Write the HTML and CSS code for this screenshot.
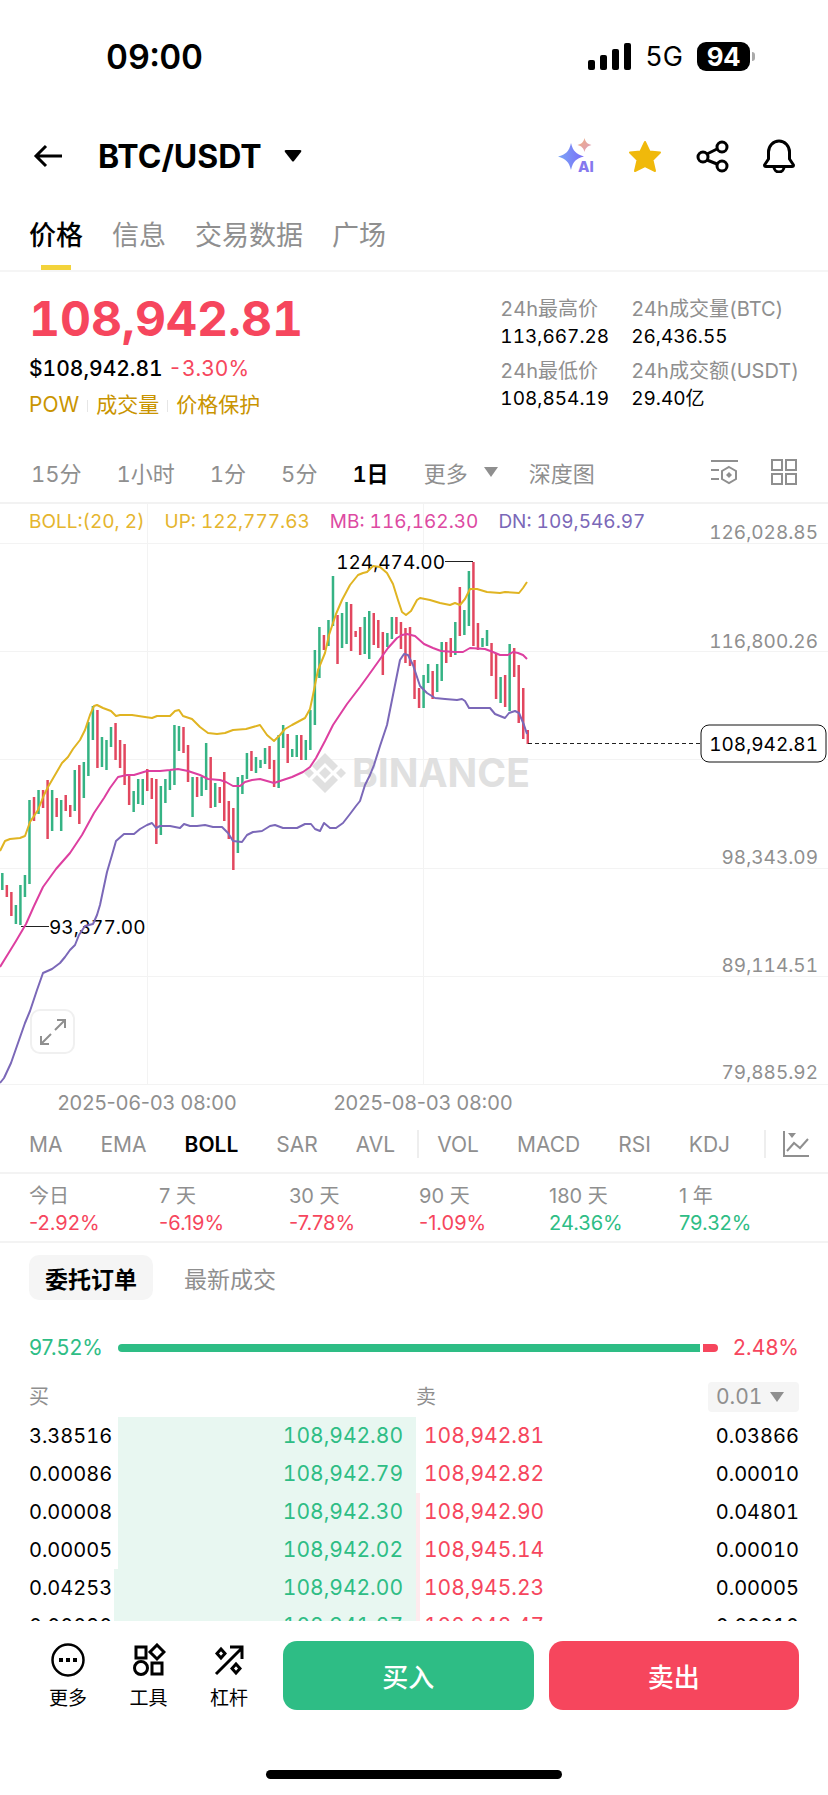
FILE: index.html
```html
<!DOCTYPE html>
<html lang="zh-CN">
<head>
    <meta charset="UTF-8">
    <meta name="viewport" content="width=device-width, initial-scale=1.0">
    <title>BTC/USDT</title>
    <link rel="stylesheet" href="styles.css">
</head>
<body>
<div class="app">
    <div class="status">
        <span class="clock">09:00</span>
        <div class="status-right">
            <svg class="signal" viewBox="0 0 43 27" width="43" height="27">
                <rect x="0" y="17" width="7" height="10" rx="2"/>
                <rect x="12" y="12" width="7" height="15" rx="2"/>
                <rect x="24" y="6" width="7" height="21" rx="2"/>
                <rect x="36" y="0" width="7" height="27" rx="2"/>
            </svg>
            <span class="network">5G</span>
            <span class="battery">94</span>
        </div>
    </div>

    <header class="header">
        <button class="icon-btn" aria-label="返回">
            <svg width="30" height="26" viewBox="0 0 30 26" fill="none" stroke="#000" stroke-width="3"><path d="M29 13H3M13 3L3 13l10 10"/></svg>
        </button>
        <button class="pair">BTC/USDT
            <svg width="18" height="12" viewBox="0 0 18 12"><path d="M2 0h14q2 0 1 2l-7 9q-1 1-2 0L1 2Q0 0 2 0z"/></svg>
        </button>
        <div class="header-actions">
            <button class="icon-btn" aria-label="AI">
                <svg class="ai-icon" width="36" height="36" viewBox="0 0 36 36">
                    <defs>
                        <linearGradient id="ai" x1="0" y1="0" x2="1" y2="0"><stop offset="0" stop-color="#7ba6f5"/><stop offset="1" stop-color="#7a6cf8"/></linearGradient>
                        <linearGradient id="spark" x1="0" y1="0" x2="1" y2="1"><stop offset="0" stop-color="#f0b080"/><stop offset="1" stop-color="#dc9cc0"/></linearGradient>
                    </defs>
                    <path fill="url(#ai)" d="M13 5c2 8 5 11 13 13.500c-8 2-11 5-13 13.500c-2-8-5-11-13-13.500c8-2 11-5 13-13.500z"/>
                    <path fill="url(#spark)" d="M26.500 0c1 4 3 6 7 7c-4 1-6 3-7 7c-1-4-3-6-7-7c4-1 6-3 7-7z"/>
                    <text class="ai-text" x="20" y="34">AI</text>
                </svg>
            </button>
            <button class="icon-btn" aria-label="收藏">
                <svg width="34" height="33" viewBox="0 0 34 33"><path fill="#f0b90b" stroke="#f0b90b" stroke-width="2" stroke-linejoin="round" d="M17 2l4.500 9.500 10.500 1-7.500 7.500 2.500 11-10-5-10 5 2.500-11L2 12.500l10.500-1z"/></svg>
            </button>
            <button class="icon-btn" aria-label="分享">
                <svg width="33" height="33" viewBox="0 0 33 33" fill="none" stroke="#000" stroke-width="3"><circle cx="7" cy="17" r="5"/><circle cx="26" cy="7" r="5"/><circle cx="26" cy="26" r="5"/><path d="M11 14l10-5M11 20l10 4"/></svg>
            </button>
            <button class="icon-btn" aria-label="提醒">
                <svg width="32" height="34" viewBox="0 0 32 34" fill="none" stroke="#000" stroke-width="3" stroke-linejoin="round"><path d="M5.500 13a10.500 11 0 0 1 21 0v7l4 6q0 1.500-1.500 1.500H3q-1.500 0-1.500-1.500l4-6zM11 28a5 5 0 0 0 10 0"/></svg>
            </button>
        </div>
    </header>

    <nav class="tabs">
        <a class="tab active" href="#price">价格</a>
        <a class="tab" href="#info">信息</a>
        <a class="tab" href="#data">交易数据</a>
        <a class="tab" href="#square">广场</a>
    </nav>

    <section class="summary" id="price">
        <div>
            <div class="last-price">108,942.81</div>
            <div class="fiat">$108,942.81 <span class="change">-3.30%</span></div>
            <div class="tags"><a href="#pow">POW</a><a href="#vol">成交量</a><a href="#protect">价格保护</a></div>
        </div>
        <dl class="stats">
            <div><dt>24h最高价</dt><dd>113,667.28</dd></div>
            <div><dt>24h成交量(BTC)</dt><dd>26,436.55</dd></div>
            <div><dt>24h最低价</dt><dd>108,854.19</dd></div>
            <div><dt>24h成交额(USDT)</dt><dd>29.40亿</dd></div>
        </dl>
    </section>

    <div class="frames">
        <button>15分</button>
        <button>1小时</button>
        <button>1分</button>
        <button>5分</button>
        <button class="active">1日</button>
        <button class="more">更多 <svg width="14" height="10" viewBox="0 0 14 10"><path fill="#8f8f8f" d="M0 0h14L7 10z"/></svg></button>
        <button>深度图</button>
        <div class="frames-tools">
            <button aria-label="指标设置">
                <svg width="27" height="26" viewBox="0 0 27 26" fill="none" stroke="#8f8f8f" stroke-width="2"><path d="M0 2h27M0 11h8M0 20h8M18 8l7 4v8l-7 4-7-4v-8z"/><path fill="#8f8f8f" stroke="none" d="M18 13l3 3-3 3-3-3z"/></svg>
            </button>
            <button aria-label="布局">
                <svg width="26" height="26" viewBox="0 0 26 26" fill="none" stroke="#8f8f8f" stroke-width="2"><path d="M1 1h10v10H1zM15 1h10v10H15zM1 15h10v10H1zM15 15h10v10H15z"/></svg>
            </button>
        </div>
    </div>

    <section class="chart">
        <div class="legend">
            <span class="up">BOLL:(20, 2)</span>
            <span class="up">UP: 122,777.63</span>
            <span class="mb">MB: 116,162.30</span>
            <span class="dn">DN: 109,546.97</span>
        </div>
        <svg class="plot" viewBox="0 504 828 612">
            <path class="grid" d="M0 543.500H828M0 651.500H828M0 759.500H828M0 868.500H828M0 976.500H828M0 1084.500H828M147.500 504V1084M423.500 504V1084"/>
            <g class="watermark">
                <path d="M325 753l13 13-5 5-8-8-8 8-5-5zM325 767l6 6-6 6-6-6zM309 768l5 5-5 5-5-5zM341 768l5 5-5 5-5-5zM312 780l5-5 8 8 8-8 5 5-13 13z"/>
                <text x="352" y="787">BINANCE</text>
            </g>
            <g id="candles"></g>
            <path class="mark" d="M445 561.500H473M21 926.500H49"/>
            <text class="peak-right" x="445" y="569">124,474.00</text>
            <text x="49" y="934">93,377.00</text>
            <g id="bands"></g>
            <path class="last-line" d="M528 743.500H700"/>
            <rect class="last-box" x="701" y="725" width="125" height="37" rx="8"/>
            <g class="axis">
                <text x="818" y="539">126,028.85</text>
                <text x="818" y="648">116,800.26</text>
                <text class="now" x="818" y="751">108,942.81</text>
                <text x="818" y="864">98,343.09</text>
                <text x="818" y="972">89,114.51</text>
                <text x="818" y="1079">79,885.92</text>
            </g>
            <g class="dates">
                <text x="147" y="1110">2025-06-03 08:00</text>
                <text x="423" y="1110">2025-08-03 08:00</text>
            </g>
        </svg>
        <button class="expand" aria-label="全屏">
            <svg width="26" height="26" viewBox="0 0 26 26" fill="none" stroke="#8f8f8f" stroke-width="2"><path d="M15 11L25 1M17 1h8v8M11 15L1 25M1 17v8h8"/></svg>
        </button>
    </section>

    <div class="indicators">
        <button>MA</button>
        <button>EMA</button>
        <button class="active">BOLL</button>
        <button>SAR</button>
        <button>AVL</button>
        <button class="sub-first">VOL</button>
        <button>MACD</button>
        <button>RSI</button>
        <button>KDJ</button>
        <button class="chart-btn" aria-label="图表">
            <svg width="27" height="27" viewBox="0 0 27 27" fill="none" stroke="#8f8f8f" stroke-width="2"><path d="M2 0v25h25M5 20l7-8 6 5 8-9"/><path fill="#8f8f8f" stroke="none" d="M6 2h8l-4 5z"/></svg>
        </button>
    </div>

    <dl class="perf">
        <div><dt>今日</dt><dd class="down">-2.92%</dd></div>
        <div><dt>7 天</dt><dd class="down">-6.19%</dd></div>
        <div><dt>30 天</dt><dd class="down">-7.78%</dd></div>
        <div><dt>90 天</dt><dd class="down">-1.09%</dd></div>
        <div><dt>180 天</dt><dd class="rise">24.36%</dd></div>
        <div><dt>1 年</dt><dd class="rise">79.32%</dd></div>
    </dl>

    <section class="orders">
        <div class="order-tabs">
            <button class="active">委托订单</button>
            <button>最新成交</button>
        </div>
        <div class="ratio">
            <span class="rise">97.52%</span>
            <div class="ratio-bar"><i class="buy-part" style="width: 97.52%"></i><i class="sell-part"></i></div>
            <span class="down">2.48%</span>
        </div>
        <table class="book">
            <colgroup><col class="col-bid"><col><col><col class="col-ask"></colgroup>
            <thead>
                <tr>
                    <th>买</th>
                    <th></th>
                    <th>卖</th>
                    <th>
                        <label class="step">
                            <select aria-label="价格精度"><option>0.01</option></select>
                            <svg width="14" height="10" viewBox="0 0 14 10"><path fill="#8f8f8f" d="M0 0h14L7 10z"/></svg>
                        </label>
                    </th>
                </tr>
            </thead>
            <tbody>
                <tr><td>3.38516</td><td class="bid"><i style="width: 100%"></i>108,942.80</td><td class="ask"><i style="width: 0%"></i>108,942.81</td><td>0.03866</td></tr>
                <tr><td>0.00086</td><td class="bid"><i style="width: 100%"></i>108,942.79</td><td class="ask"><i style="width: 0%"></i>108,942.82</td><td>0.00010</td></tr>
                <tr><td>0.00008</td><td class="bid"><i style="width: 100%"></i>108,942.30</td><td class="ask"><i style="width: 1.4%"></i>108,942.90</td><td>0.04801</td></tr>
                <tr><td>0.00005</td><td class="bid"><i style="width: 100%"></i>108,942.02</td><td class="ask"><i style="width: 1.4%"></i>108,945.14</td><td>0.00010</td></tr>
                <tr><td>0.04253</td><td class="bid"><i style="width: 101.3%"></i>108,942.00</td><td class="ask"><i style="width: 1.4%"></i>108,945.23</td><td>0.00005</td></tr>
                <tr><td>0.00090</td><td class="bid"><i style="width: 101.3%"></i>108,941.27</td><td class="ask"><i style="width: 1.4%"></i>108,948.47</td><td>0.00010</td></tr>
            </tbody>
        </table>
    </section>

    <footer class="footer">
        <div class="actions">
            <button class="action">
                <svg width="34" height="34" viewBox="0 0 34 34" fill="none" stroke="#000" stroke-width="2.500"><circle cx="17" cy="17" r="15.500"/><path stroke-width="4" d="M8 17h4M15 17h4M22 17h4"/></svg>
                更多
            </button>
            <button class="action">
                <svg width="34" height="34" viewBox="0 0 34 34" fill="none" stroke="#000" stroke-width="3"><path d="M4 4h10v11H4zM20 20h10v11H20zM25 2l7 7-7 7-7-7z"/><circle cx="9" cy="25" r="6.500"/></svg>
                工具
            </button>
            <button class="action">
                <svg width="34" height="34" viewBox="0 0 34 34" fill="none" stroke="#000" stroke-width="3"><path d="M4 31L30 5M18 4h12v12M9 6l4 4.500-4 4.500-4-4.500zM24 21l4 4.500-4 4.500-4-4.500z"/></svg>
                杠杆
            </button>
        </div>
        <button class="trade buy">买入</button>
        <button class="trade sell">卖出</button>
    </footer>
    <div class="home"></div>
</div>
<script src="chart.js"></script>
</body>
</html>
```
FILE: styles.css
```css
* {
    box-sizing: border-box;
}
body {
    margin: 0;
    background-color: #fff;
    color: #000;
    font-family: Inter, "Noto Sans CJK SC", sans-serif;
    font-size: 20px;
    font-variant-numeric: tabular-nums;
}
button, select {
    font: inherit;
    font-variant-numeric: inherit;
    color: inherit;
    background: none;
    border: none;
    padding: 0;
    margin: 0;
    cursor: pointer;
}
a {
    color: inherit;
    text-decoration: none;
}
dl, dd {
    margin: 0;
}
svg {
    display: block;
    flex: none;
}
.app {
    display: flex;
    flex-direction: column;
    height: 100vh;
    overflow: hidden;
}
.app > * {
    flex: none;
}
.rise {
    color: #2ebd85;
}
.down {
    color: #f6465d;
}

/* status bar */
.status {
    display: flex;
    justify-content: space-between;
    align-items: center;
    height: 112px;
    padding: 0 78px 0 106px;
}
.clock {
    font-size: 34px;
    font-weight: 600;
}
.status-right {
    display: flex;
    align-items: center;
    gap: 14px;
}
.network {
    font-size: 27px;
}
.battery {
    position: relative;
    width: 53px;
    height: 29px;
    border-radius: 9px;
    background-color: #000;
    color: #fff;
    font-size: 26px;
    font-weight: 700;
    line-height: 29px;
    text-align: center;
}
.battery::after {
    content: "";
    position: absolute;
    right: -5px;
    top: 10px;
    width: 3px;
    height: 9px;
    border-radius: 0 3px 3px 0;
    background-color: #aaa;
}

/* header */
.header {
    display: flex;
    align-items: center;
    height: 88px;
    padding: 0 33px;
}
.pair {
    display: flex;
    align-items: center;
    gap: 22px;
    margin-left: 35px;
    font-size: 32px;
    font-weight: 700;
}
.header-actions {
    display: flex;
    align-items: center;
    gap: 34px;
    margin-left: auto;
}
.ai-icon {
    overflow: visible;
}
.ai-text {
    font-size: 15px;
    font-weight: 800;
    fill: #8578ee;
}

/* tabs */
.tabs {
    display: flex;
    gap: 29px;
    height: 72px;
    padding: 0 29px;
    border-bottom: 2px solid #f5f5f5;
    font-size: 27px;
    line-height: 71px;
    color: #8f8f8f;
}
.tab.active {
    position: relative;
    color: #000;
    font-weight: 500;
}
.tab.active::after {
    content: "";
    position: absolute;
    left: 12px;
    right: 12px;
    bottom: 0;
    height: 5px;
    background-color: #f3d33b;
}

/* summary */
.summary {
    display: flex;
    justify-content: space-between;
    height: 172px;
    padding: 21px 29px 0;
}
.last-price {
    color: #f6465d;
    font-size: 48px;
    font-weight: 700;
    line-height: 52px;
}
.fiat {
    margin-top: 8px;
    font-size: 21px;
    font-weight: 500;
    line-height: 32px;
}
.change {
    color: #f6465d;
    font-weight: 400;
}
.tags {
    display: flex;
    align-items: center;
    margin-top: 4px;
    color: #c99400;
    font-size: 21px;
    line-height: 32px;
}
.tags a + a::before {
    content: "";
    display: inline-block;
    width: 1px;
    height: 12px;
    margin: 0 8px;
    background-color: #e6e6e6;
}
.stats {
    display: grid;
    grid-template-columns: auto auto;
    column-gap: 22px;
    align-content: start;
    row-gap: 8px;
    padding-top: 3px;
    line-height: 27px;
}
.stats dt {
    color: #8f8f8f;
}
.stats dd {
    font-size: 19px;
}

/* timeframes */
.frames {
    display: flex;
    align-items: center;
    gap: 35px;
    height: 56px;
    padding: 0 31px;
    color: #8f8f8f;
    font-size: 22px;
}
.frames .active {
    color: #000;
    font-weight: 600;
}
.more {
    display: flex;
    align-items: center;
    gap: 16px;
    margin-right: -4px;
}
.frames-tools {
    display: flex;
    gap: 33px;
    margin-left: auto;
}

/* chart */
.chart {
    position: relative;
    margin-top: 2px;
    border-top: 2px solid #f2f2f2;
}
.legend {
    position: absolute;
    top: 5px;
    left: 29px;
    display: flex;
    gap: 20px;
    font-size: 19px;
    line-height: 26px;
}
.up {
    color: #e5b52e;
}
.mb {
    color: #dd4aa2;
}
.dn {
    color: #7b68b8;
}
.plot {
    width: 100%;
    height: auto;
    font-size: 19px;
}
.grid {
    stroke: #f3f3f3;
}
.watermark {
    fill: #e0e0e0;
    font-size: 39px;
    font-weight: 700;
}
.candle {
    stroke-width: 2.5;
}
.candle.green {
    stroke: #35b384;
}
.candle.red {
    stroke: #e2475f;
}
.band {
    fill: none;
    stroke-width: 2;
    stroke-linejoin: round;
}
.band.upper {
    stroke: #e0b422;
}
.band.middle {
    stroke: #dd3fa0;
}
.band.lower {
    stroke: #7b68b8;
}
.mark {
    stroke: #222;
}
.axis text, .peak-right {
    text-anchor: end;
}
.axis text {
    fill: #8f8f8f;
}
.axis .now {
    fill: #000;
}
.last-line {
    stroke: #222;
    stroke-dasharray: 4 3;
}
.last-box {
    fill: #fff;
    stroke: #111;
}
.dates text {
    fill: #8f8f8f;
    font-size: 20px;
    font-variant-numeric: normal;
    text-anchor: middle;
}
.expand {
    position: absolute;
    left: 30px;
    bottom: 62px;
    display: flex;
    align-items: center;
    justify-content: center;
    width: 45px;
    height: 45px;
    border: 2px solid #f0f0f0;
    border-radius: 10px;
    background-color: #fff;
}

/* indicators */
.indicators {
    display: flex;
    align-items: center;
    gap: 38px;
    height: 56px;
    padding: 0 18px 0 29px;
    color: #8f8f8f;
    font-size: 21px;
}
.indicators .active {
    color: #000;
    font-weight: 600;
}
.sub-first, .chart-btn {
    height: 28px;
    padding-left: 18px;
    border-left: 2px solid #eee;
}
.sub-first {
    margin-left: -16px;
}
.chart-btn {
    margin-left: -4px;
    padding-left: 16px;
}

/* performance */
.perf {
    display: grid;
    grid-template-columns: repeat(6, 1fr);
    height: 71px;
    padding: 9px 19px 0 29px;
    border-top: 2px solid #f3f3f3;
    border-bottom: 2px solid #f3f3f3;
    font-variant-numeric: normal;
    line-height: 27px;
}
.perf dt {
    color: #8f8f8f;
}

/* order book */
.app > .orders {
    flex: 1 1 0;
    min-height: 0;
    overflow: hidden;
}
.order-tabs {
    display: flex;
    gap: 15px;
    padding: 12px 29px 0;
    font-size: 23px;
    color: #8f8f8f;
}
.order-tabs button {
    height: 45px;
    padding: 0 16px;
    border-radius: 10px;
}
.order-tabs .active {
    background-color: #f5f5f5;
    color: #000;
    font-weight: 600;
}
.ratio {
    display: flex;
    align-items: center;
    gap: 15px;
    margin-top: 32px;
    padding: 0 29px;
    font-size: 21px;
    font-variant-numeric: normal;
    line-height: 32px;
}
.ratio-bar {
    display: flex;
    gap: 3px;
    flex: 1;
    height: 8px;
    border-radius: 4px;
    overflow: hidden;
}
.buy-part {
    background-color: #2ebd85;
}
.sell-part {
    flex: 1;
    min-width: 15px;
    background-color: #f6465d;
}
.book {
    width: 100%;
    margin-top: 13px;
    border-collapse: collapse;
    table-layout: fixed;
    font-size: 21px;
    line-height: 38px;
}
.col-bid {
    width: 118px;
}
.col-ask {
    width: 114px;
}
.book th {
    height: 40px;
    padding: 0;
    color: #8f8f8f;
    font-size: 20px;
    font-weight: 400;
    text-align: left;
}
.book td {
    padding: 0;
}
.book td:first-child, .book td:last-child {
    font-size: 20px;
}
.book th:first-child, .book td:first-child {
    padding-left: 29px;
}
.book td:last-child, .book th:last-child {
    padding-right: 29px;
    text-align: right;
}
.bid, .ask {
    position: relative;
    z-index: 0;
}
.book .bid {
    padding-right: 13px;
    color: #2ebd85;
    text-align: right;
}
.book .ask {
    padding-left: 8px;
    color: #f6465d;
}
.bid i, .ask i {
    position: absolute;
    top: 0;
    bottom: 0;
    z-index: -1;
}
.bid i {
    right: 0;
    background-color: #e8f7f1;
}
.ask i {
    left: 0;
    background-color: #feebee;
}
.step {
    display: flex;
    align-items: center;
    float: right;
    gap: 8px;
    width: 85px;
    min-width: 91px;
    height: 30px;
    padding: 0 15px 0 8px;
    border-radius: 4px;
    background-color: #f5f5f5;
}
.step select {
    appearance: none;
    width: 46px;
    font-size: 21px;
    color: #8f8f8f;
}

/* bottom bar */
.footer {
    display: flex;
    gap: 15px;
    height: 109px;
    padding: 20px 29px 0;
    background-color: #fff;
}
.actions {
    display: flex;
    justify-content: space-between;
    width: 239px;
}
.action {
    display: flex;
    flex-direction: column;
    align-items: center;
    gap: 8px;
    height: 69px;
    width: 78px;
    padding-top: 2px;
    font-size: 19px;
    line-height: 28px;
}
.trade {
    flex: 1;
    height: 69px;
    border-radius: 14px;
    color: #fff;
    font-size: 26px;
    font-weight: 500;
}
.buy {
    background-color: #2ebd85;
}
.sell {
    background-color: #f6465d;
}
.home {
    width: 296px;
    height: 9px;
    margin: 40px auto 16px;
    border-radius: 5px;
    background-color: #000;
}
```
FILE: chart.js
```js
const svgNS = 'http://www.w3.org/2000/svg';

// direction (g = up, r = down), high, low
const candles = `g873-890 r885-897 r892-916 g905-924 g885-925 g875-897 g800-884 r797-821 g790-814 r790-808
r780-839 g790-831 r798-817 g800-831 r795-811 r805-817 g770-811 r765-824 g762-798 g722-776
g706-740 r710-768 g737-767 g740-770 g727-747 r723-760 r740-768 r744-785 r776-805 g791-812
g779-804 g779-805 r769-791 r778-799 r779-844 g786-835 g779-803 g770-790 g725-785 g726-751
r727-753 r745-782 g777-817 r777-797 g777-796 g743-790 r757-808 g783-807 r787-803 r772-821
r801-839 r808-870 g777-853 g775-794 g753-779 r751-771 g757-773 g760-768 g748-764 r746-769
r760-787 g735-788 g725-748 r734-763 g749-757 g735-757 r735-760 g740-760 g710-750 g650-725
g627-678 r635-650 g620-646 g576-626 r615-664 g613-648 g602-644 r604-651 r631-637 r627-655
g617-654 g611-659 r613-645 r620-648 r632-675 g633-647 g617-639 r617-634 r622-649 r628-663
r627-666 r660-699 r688-708 g675-708 g664-683 r671-699 g664-692 g642-681 r642-663 r638-657
g622-655 r587-636 g610-635 g571-626 r562-646 r623-650 g638-647 g630-646 r643-676 r653-699
g677-703 r675-707 g644-711 r648-677 r665-723 r688-739 r730-744`.split(/\s+/);

const bands = {
    upper: '0,851 5,841 10,839 20,838 25,836 30,822 38,810 44,795 48,787 55,775 62,763 68,757 73,749 80,740 85,730 90,715 94,706 97,705 103,708 111,711 116,716 120,715 132,715 145,717 152,718 157,716 170,716 175,711 179,710 183,716 192,719 200,727 208,733 217,734 225,733 233,730 246,729 260,725 267,735 274,741 280,735 285,729 292,725 305,718 310,709 313,695 318,670 325,653 329,635 336,614 342,600 350,585 358,575 363,573 367,572 373,566 380,567 387,573 393,584 398,600 402,612 406,615 411,611 417,600 420,598 430,600 440,603 450,605 455,603 460,605 465,599 470,589 477,589 487,592 500,593 505,592 519,593 523,588 527,582',
    middle: '0,967 8,954 16,941 26,924 34,906 43,887 56,869 70,853 82,835 94,813 104,798 110,788 118,777 127,775 134,775 147,771 160,771 170,770 178,769 188,771 200,775 208,779 220,780 226,782 233,786 240,786 245,782 252,780 260,779 267,781 274,783 283,780 292,777 303,772 310,767 316,758 325,741 333,725 347,704 360,687 368,676 378,662 388,648 397,638 402,635 407,634 415,636 424,644 433,648 441,651 455,652 463,652 470,648 485,649 493,652 500,655 508,655 513,652 518,653 523,655 527,659',
    lower: '0,1083 4,1078 11,1063 18,1043 25,1023 30,1011 37,990 43,973 52,969 60,963 65,957 70,950 75,945 79,935 85,926 93,924 97,915 100,905 107,872 112,855 116,841 124,834 134,834 140,829 147,825 152,823 156,828 160,826 170,826 180,828 184,824 190,826 197,826 205,825 213,827 222,827 228,833 233,841 242,842 247,835 253,832 262,831 270,826 275,825 283,828 297,828 305,824 311,824 315,829 320,831 324,823 330,828 336,828 343,823 350,814 356,806 360,801 365,785 370,775 374,765 380,746 387,725 392,700 397,675 400,660 404,654 408,655 413,665 420,686 427,693 435,698 445,699 457,700 462,699 465,701 469,708 490,708 495,714 505,718 509,713 515,711 519,713 524,725 527,734'
};

const candleGroup = document.getElementById('candles');
candles.forEach((c, i) => {
    const x = 2.3 + i * 4.53;
    const [high, low] = c.slice(1).split('-');
    const line = document.createElementNS(svgNS, 'line');
    line.setAttribute('class', 'candle ' + (c[0] === 'g' ? 'green' : 'red'));
    line.setAttribute('x1', x);
    line.setAttribute('x2', x);
    line.setAttribute('y1', high);
    line.setAttribute('y2', low);
    candleGroup.appendChild(line);
});

const bandGroup = document.getElementById('bands');
Object.keys(bands).forEach(name => {
    const line = document.createElementNS(svgNS, 'polyline');
    line.setAttribute('class', 'band ' + name);
    line.setAttribute('points', bands[name]);
    bandGroup.appendChild(line);
});
```
